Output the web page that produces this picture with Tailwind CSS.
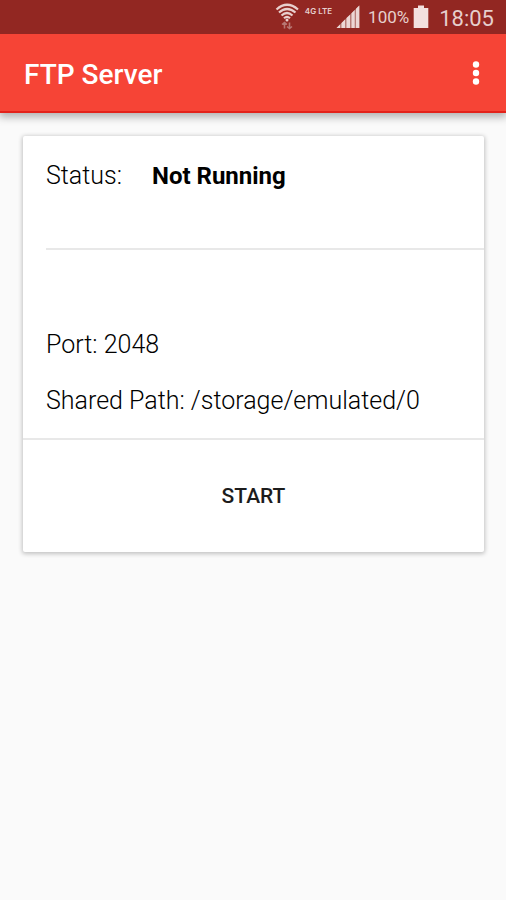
<!DOCTYPE html>
<html lang="en">
<head>
<meta charset="utf-8">
<meta name="viewport" content="width=device-width, initial-scale=1">
<title>FTP Server</title>
<script src="https://cdn.jsdelivr.net/npm/@tailwindcss/browser@4"></script>
</head>
<body class="min-h-screen bg-[#fafafa] font-[Roboto,sans-serif] text-[#1c1c1c]">
<div class="relative z-10 flex h-[34px] items-center justify-end bg-[#922722] pr-3 text-[#e6cfcd]">
  <svg class="mr-1 h-7 w-7" viewBox="0 0 28 28" fill="none" stroke="#e9cfcd" stroke-width="2.2" aria-hidden="true">
    <path d="M3.500 6.500Q14 -3 25 6.500M6 9.500Q14 2.500 22.500 9.500M8.500 12.500Q14 7.500 19.500 12.500M11 15.200Q14 12.500 17 15.200"/>
    <circle cx="14" cy="17" r="1.500" fill="#e9cfcd" stroke="none"/>
    <path d="M9 21.500L11.500 19.500L14 21.500M11.500 20V25.500M14 23.500L16.500 25.500L19 23.500M16.500 19.500V25" stroke="#b87773" stroke-width="1.600"/>
  </svg>
  <span class="mr-1 mb-3 font-[Inter,sans-serif] text-[8px] leading-[10px] font-semibold">4G LTE</span>
  <svg class="mr-2 h-6 w-6" viewBox="0 0 24 24" aria-hidden="true">
    <path d="M0.500 23L23.300 0.500V23Z" fill="#b97c78"/>
    <path d="M0.500 23L4 19.500V23ZM5.500 23V18L9 14.600V23ZM10.500 23V13.100L14 9.700V23ZM15.500 23V8.200L18.700 5V23ZM20 23V3.800L23.300 0.500V23Z" fill="#ecd6d4"/>
  </svg>
  <span class="mr-1 text-[17px] leading-6">100%</span>
  <svg class="mr-2 h-6 w-4" viewBox="0 0 16 24" fill="#f3e0df" aria-hidden="true"><path d="M5 0.500H11V3H15.300V23H0.700V3H5Z"/></svg>
  <time class="pt-1 pl-0.5 text-[22px] leading-8">18:05</time>
</div>
<header class="flex h-[79px] items-center justify-between border-b-2 border-[#e3221a] bg-[#f64436] pl-6 pr-4 text-white shadow-[0_3px_8px_1px_rgba(0,0,0,0.3)]">
  <h1 class="pt-1 text-[28px] leading-8 font-medium">FTP Server</h1>
  <button type="button" aria-label="More options" class="flex h-10 w-7 items-center justify-center">
    <svg class="h-7 w-2" viewBox="0 0 8 28" fill="currentColor" aria-hidden="true"><circle cx="4" cy="5.500" r="3.200"/><circle cx="4" cy="14" r="3.200"/><circle cx="4" cy="22.500" r="3.200"/></svg>
  </button>
</header>
<main class="px-[22px] pt-[23px]">
  <section class="ml-px rounded-xs bg-white text-[25px] leading-8 font-light text-black shadow-[0_1px_4px_1px_rgba(0,0,0,0.22)]">
    <div class="ml-[23px] flex h-[114px] items-start gap-[30px] border-b-2 border-[#e8e8e8] pt-6">
      <span>Status:</span><strong class="text-[24px] font-bold">Not Running</strong>
    </div>
    <div class="flex flex-col gap-6 border-b-2 border-[#e8e8e8] px-[23px] pt-[79px] pb-[21px]">
      <p>Port: 2048</p>
      <p>Shared Path: /storage/emulated/0</p>
    </div>
    <button type="button" class="block w-full py-10 text-[21px] leading-8 font-medium text-[#1c1c1c]">START</button>
  </section>
</main>
</body>
</html>
